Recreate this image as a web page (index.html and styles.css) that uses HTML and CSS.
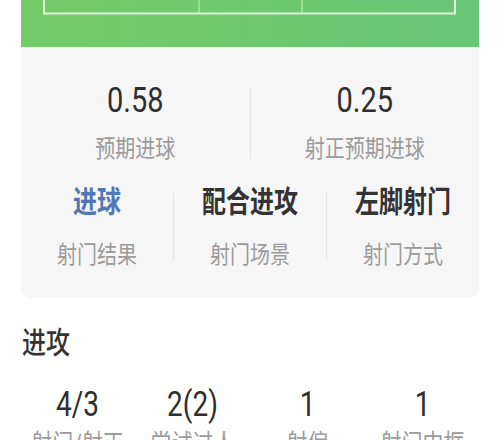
FILE: index.html
```html
<!DOCTYPE html>
<html lang="zh-CN">
<head>
    <meta charset="UTF-8">
    <title>射门详情</title>
    <link rel="stylesheet" href="styles.css">
</head>
<body>
    <div class="shot-card">
        <div class="pitch">
            <svg width="457" height="47" viewBox="0 0 457 47">
                <line x1="178" y1="0" x2="178" y2="13" stroke="#cdeec4" stroke-width="1"/>
                <line x1="281" y1="0" x2="281" y2="13" stroke="#cdeec4" stroke-width="1"/>
                <polyline points="23,0 23,13.5 434,13.5 434,0" fill="none" stroke="#e4f8dc" stroke-width="2"/>
            </svg>
        </div>

        <div class="xg-row">
            <div class="xg-item">
                <div class="xg-value">0.58</div>
                <div class="item-label">预期进球</div>
            </div>
            <div class="divider xg-divider"></div>
            <div class="xg-item">
                <div class="xg-value">0.25</div>
                <div class="item-label">射正预期进球</div>
            </div>
        </div>

        <div class="info-row">
            <div class="info-item">
                <div class="info-title goal">进球</div>
                <div class="item-label">射门结果</div>
            </div>
            <div class="divider info-divider"></div>
            <div class="info-item">
                <div class="info-title">配合进攻</div>
                <div class="item-label">射门场景</div>
            </div>
            <div class="divider info-divider"></div>
            <div class="info-item">
                <div class="info-title">左脚射门</div>
                <div class="item-label">射门方式</div>
            </div>
        </div>
    </div>

    <h2 class="section-title">进攻</h2>
    <div class="stat-row">
        <div class="stat">
            <div class="stat-value">4/3</div>
            <div class="stat-label">射门/射正</div>
        </div>
        <div class="stat">
            <div class="stat-value">2(2)</div>
            <div class="stat-label">尝试过人</div>
        </div>
        <div class="stat">
            <div class="stat-value">1</div>
            <div class="stat-label">射偏</div>
        </div>
        <div class="stat">
            <div class="stat-value">1</div>
            <div class="stat-label">射门中框</div>
        </div>
    </div>
</body>
</html>
```

FILE: styles.css
```css
body { margin: 0; background: #fff; font-family: Roboto, "Noto Sans CJK SC", sans-serif; color: #333; overflow: hidden; }

.xg-value, .item-label, .info-title, .section-title, .stat-value, .stat-label { transform: scaleY(1.22); }
.section-title { transform-origin: left center; }

.shot-card { margin: 0 21px; background: #f6f6f6; border-radius: 0 0 10px 10px; }
.pitch { height: 47px; background: linear-gradient(90deg, #74cb68, #6cc86f 60%, #69c677); }
.pitch svg { display: block; }

.divider { width: 1px; background: #e4e4e4; }

.xg-row { display: flex; align-items: center; padding-top: 35px; }
.xg-item { flex: 1; text-align: center; }
.xg-value { font-size: 29px; line-height: 36px; margin-bottom: 15px; color: #2f2f2f; }
.xg-divider { height: 70px; }

.item-label { font-size: 20px; line-height: 30px; color: #9b9b9b; }

.info-row { display: flex; align-items: center; padding: 22px 0 29px; }
.info-item { flex: 1; text-align: center; }
.info-title { font-size: 24px; line-height: 34px; font-weight: bold; margin-bottom: 20px; color: #333; }
.info-title.goal { color: #5277b8; }
.info-divider { height: 68px; }

.section-title { margin: 28px 0 0 22px; font-size: 24px; line-height: 34px; font-weight: 500; color: #333; }

.stat-row { display: flex; margin: 30px 20px 0; }
.stat { flex: 1; text-align: center; }
.stat-value { font-size: 28px; line-height: 30px; color: #2f2f2f; }
.stat-label { margin-top: 10px; font-size: 21px; line-height: 28px; color: #9b9b9b; }
```
